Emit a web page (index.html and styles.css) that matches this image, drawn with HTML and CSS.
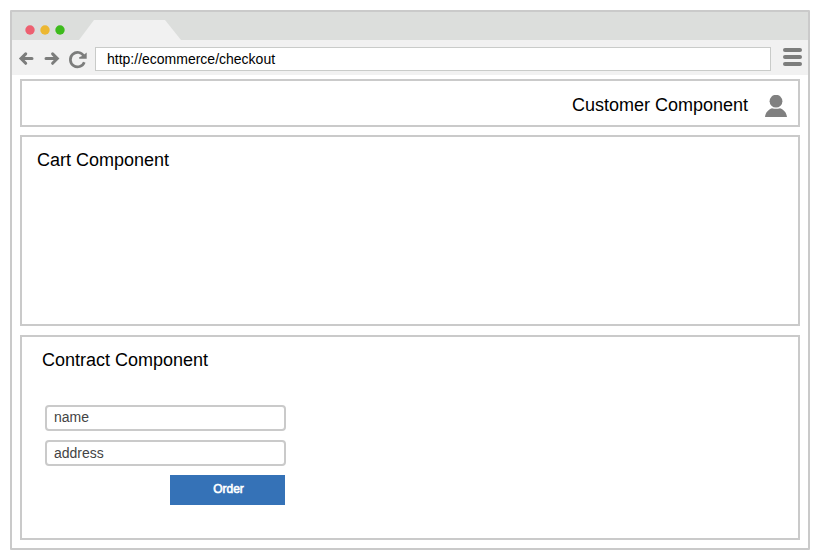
FILE: index.html
```html
<!DOCTYPE html>
<html lang="en">
<head>
<meta charset="utf-8">
<title>Checkout</title>
<link rel="stylesheet" href="styles.css">
</head>
<body>
<div class="window">
  <div class="tabbar">
    <svg class="dots" width="42" height="12" viewBox="0 0 42 12">
      <circle cx="6" cy="6" r="4.7" fill="#ed6070"/>
      <circle cx="21" cy="6" r="4.7" fill="#ecb731"/>
      <circle cx="36" cy="6" r="4.7" fill="#3dbb1c"/>
    </svg>
    <div class="tab"></div>
  </div>
  <div class="toolbar">
    <svg class="nav" width="83" height="35" viewBox="12 40 83 35">
      <g fill="none" stroke="#7c7d7c" stroke-width="3" stroke-linecap="round">
        <path d="M21.3 58.6H32M25.7 53.9L21 58.6L25.7 63.3M46 58.6H56.7M52.6 53.9L57.3 58.6L52.6 63.3"/>
        <path stroke-width="2.7" stroke-linecap="butt" d="M83.9 56.2A7.2 7.2 0 1 0 84.3 62.2"/>
      </g>
      <path fill="#7c7d7c" d="M86.7 52.6V58.8H79.2V57.2L82.6 55.8Z"/>
    </svg>
    <div class="url">http://ecommerce/checkout</div>
    <div class="menu"><span></span><span></span><span></span></div>
  </div>
  <main class="page">
    <section class="panel customer">
      <h2>Customer Component</h2>
      <svg class="user" width="22" height="22" viewBox="0 0 22 22" fill="#808080">
        <circle cx="11" cy="6.2" r="6.4"/>
        <path d="M0 22C0.4 17.5 3.4 14.4 7 13.2Q11 14.4 15 13.2C18.6 14.4 21.6 17.5 22 22Z"/>
      </svg>
    </section>
    <section class="panel cart">
      <h2>Cart Component</h2>
    </section>
    <section class="panel contract">
      <h2>Contract Component</h2>
      <div class="form">
        <div class="field">name</div>
        <div class="field address">address</div>
        <div class="order">Order</div>
      </div>
    </section>
  </main>
</div>
</body>
</html>
```
FILE: styles.css
```css
* { box-sizing: border-box; }
body {
  margin: 0;
  padding: 10px;
  background: #fff;
  color: #000;
  font-family: "Liberation Sans", Arial, sans-serif;
}
.window {
  width: 800px;
  height: 540px;
  border: 2px solid #cacaca;
  border-radius: 1px;
}
.tabbar {
  display: flex;
  height: 28px;
  padding: 8px 0 0 12px;
  background: #dcdedc;
}
.dots { margin-top: 3.5px; }
.tab {
  width: 102px;
  height: 20px;
  margin-left: 13px;
  background: #f1f1f1;
  clip-path: polygon(15px 0, 86px 0, 102px 100%, 0 100%);
}
.toolbar {
  display: flex;
  height: 35px;
  background: #f1f1f1;
}
.url {
  width: 676px;
  height: 24px;
  margin-top: 7px;
  padding-left: 11px;
  border: 1px solid #c9cbc9;
  background: #fff;
  font-size: 14px;
  line-height: 23px;
}
.menu {
  display: flex;
  flex-direction: column;
  gap: 3px;
  margin: 8px 0 0 12px;
}
.menu span {
  width: 19px;
  height: 4px;
  border-radius: 2px;
  background: #7c7d7c;
}
.page {
  display: flex;
  flex-direction: column;
  padding: 4px 8px 0;
}
.panel { border: 2px solid #cacaca; }
h2 {
  margin: 0;
  font-size: 18px;
  font-weight: 400;
  line-height: 20px;
}
.customer {
  display: flex;
  justify-content: flex-end;
  height: 48px;
  padding: 14px 11px 0 0;
}
.user { margin-left: 17px; }
.cart {
  height: 191px;
  margin-top: 8px;
  padding: 13px 0 0 15px;
}
.contract {
  height: 205px;
  margin-top: 9px;
  padding: 13px 0 0 20px;
}
.form {
  display: flex;
  flex-direction: column;
  width: 241px;
  margin: 35px 0 0 3px;
}
.field {
  height: 26px;
  padding-left: 7px;
  border: 2px solid #cacaca;
  border-radius: 4px;
  color: #444;
  font-size: 14px;
  line-height: 21px;
}
.address {
  margin-top: 9px;
  line-height: 22px;
}
.order {
  align-self: flex-end;
  width: 115px;
  height: 30px;
  margin: 9px 1px 0 0;
  padding-left: 2px;
  background: #3572b7;
  color: #fff;
  font-size: 12px;
  line-height: 28px;
  text-align: center;
  -webkit-text-stroke: 0.6px #fff;
}
```
